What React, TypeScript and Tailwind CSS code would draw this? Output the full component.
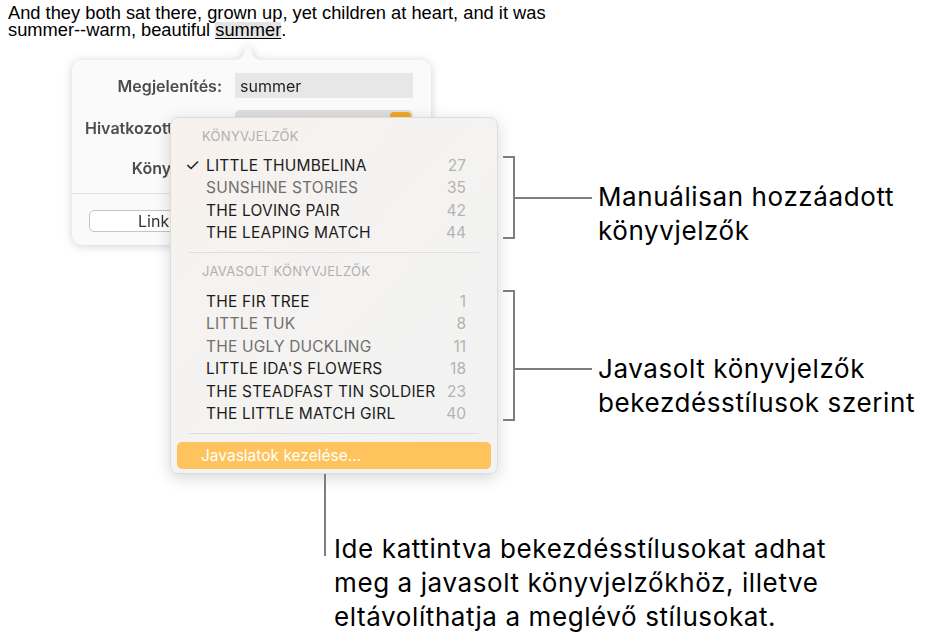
import React from "react";

const bookmarks = [
  { name: "LITTLE THUMBELINA", page: "27", dim: false, checked: true },
  { name: "SUNSHINE STORIES", page: "35", dim: true, checked: false },
  { name: "THE LOVING PAIR", page: "42", dim: false, checked: false },
  { name: "THE LEAPING MATCH", page: "44", dim: false, checked: false },
];

const suggested = [
  { name: "THE FIR TREE", page: "1", dim: false },
  { name: "LITTLE TUK", page: "8", dim: true },
  { name: "THE UGLY DUCKLING", page: "11", dim: true },
  { name: "LITTLE IDA'S FLOWERS", page: "18", dim: false },
  { name: "THE STEADFAST TIN SOLDIER", page: "23", dim: false },
  { name: "THE LITTLE MATCH GIRL", page: "40", dim: false },
];

function Row({ name, page, dim, checked }: { name: string; page: string; dim: boolean; checked?: boolean }) {
  return (
    <div className="flex h-[22.5px] items-center pl-[14px] pr-[31px]">
      <span className="w-[21px] text-[17px] leading-none text-[#1c1c1c]">{checked ? "✓" : ""}</span>
      <span className={`flex-1 text-[15.5px] tracking-[0.2px] ${dim ? "text-[#6f6f6f]" : "text-[#1c1c1c]"}`}>{name}</span>
      <span className="text-[15.5px] text-[#b3b3b3]">{page}</span>
    </div>
  );
}

function SectionHeader({ children }: { children: React.ReactNode }) {
  return (
    <div className="flex h-[20px] items-center pl-[31px] text-[13px] tracking-[0.3px] text-[#b0b0b0]">{children}</div>
  );
}

export default function App() {
  return (
    <div className="relative h-[643px] w-[937px] overflow-hidden bg-white font-['Inter',sans-serif]">
      <p className="pl-[8px] pt-[4px] font-['Liberation_Sans',Arial,sans-serif] text-[18.3px] leading-[17px] text-black">
        And they both sat there, grown up, yet children at heart, and it was
        <br />
        summer--warm, beautiful{" "}
        <span className="inline-block bg-[#e4e4e4] leading-[16px] underline underline-offset-2">summer</span>.
      </p>

      {/* link popover */}
      <div className="relative ml-[72px] mt-[22px] w-[359px] drop-shadow-[0_1px_5px_rgba(0,0,0,0.18)]">
        <svg className="absolute left-[156px] top-[-16px]" width="40" height="17" viewBox="0 0 40 17">
          <path d="M0 17 C8 17 12 15 15 11 L19 2 Q20 0 21 2 L25 11 C28 15 32 17 40 17 Z" fill="#fafafa" />
        </svg>
        <div className="flex h-[185px] flex-col rounded-[10px] bg-[#fafafa] pt-[13px]">
          <div className="flex h-[25px] items-center gap-[13px]">
            <span className="w-[150px] text-right text-[16px] font-semibold text-[#4d4d4d]">Megjelenítés:</span>
            <div className="flex h-[25px] w-[178px] items-center bg-[#e7e7e7] pl-[5px] text-[16px] text-[#1f1f1f]">
              summer
            </div>
          </div>
          <div className="mt-[12px] flex h-[28px] items-start gap-[13px]">
            <span className="mt-[6px] w-[150px] whitespace-nowrap pl-[13px] text-[16px] font-semibold text-[#4d4d4d]">
              Hivatkozott elem:
            </span>
            <div className="relative h-[28px] w-[178px] rounded-[5px] bg-[#dedede]">
              <div className="absolute right-[2px] top-[2px] h-[18px] w-[21px] rounded-[4px] bg-[#f3a72a]" />
            </div>
          </div>
          <div className="mt-[20px] flex h-[20px] items-center">
            <span className="w-[150px] text-right text-[16px] font-semibold text-[#4d4d4d]">Könyvjelző:</span>
          </div>
          <div className="mt-[15px] h-px w-full bg-[#e1e1e1]" />
          <div className="ml-[17px] mt-[16px] flex h-[22px] w-[150px] items-center whitespace-nowrap rounded-[5px] border border-[#c4c4c4] bg-white pl-[48px] text-[16px] text-[#333]">
            Link megnyitása
          </div>
        </div>
      </div>

      {/* bookmark menu */}
      <div className="absolute left-[170px] top-[117px] flex h-[357px] w-[328px] flex-col rounded-[8px] border border-[#dcdcdc] bg-gradient-to-br from-[#f7f1ec] via-[#f4f3f2] to-[#f2f2f2] pt-[9px] shadow-[0_4px_16px_rgba(0,0,0,0.16)]">
        <SectionHeader>KÖNYVJELZŐK</SectionHeader>
        <div className="mt-[7px]">
          {bookmarks.map((b) => (
            <Row key={b.name} {...b} />
          ))}
        </div>
        <div className="mx-[18px] mt-[8px] h-px bg-[#dedede]" />
        <div className="mt-[9px]">
          <SectionHeader>JAVASOLT KÖNYVJELZŐK</SectionHeader>
        </div>
        <div className="mt-[8px]">
          {suggested.map((b) => (
            <Row key={b.name} {...b} />
          ))}
        </div>
        <div className="mx-[18px] mt-[8px] h-px bg-[#dedede]" />
        <div className="mx-[6px] mt-[8px] flex h-[27px] items-center rounded-[5px] bg-[#fec35c] pl-[24px] text-[15.5px] text-white">
          Javaslatok kezelése...
        </div>
      </div>

      {/* callout brackets */}
      <div className="absolute left-[503px] top-[156px] h-[83px] w-[12px] border-y-2 border-r-2 border-[#7e7e7e]" />
      <div className="absolute left-[513px] top-[197px] h-[2px] w-[79px] bg-[#7e7e7e]" />
      <div className="absolute left-[503px] top-[290px] h-[131px] w-[12px] border-y-2 border-r-2 border-[#7e7e7e]" />
      <div className="absolute left-[513px] top-[368px] h-[2px] w-[79px] bg-[#7e7e7e]" />
      <div className="absolute left-[324px] top-[474px] h-[82px] w-[2px] bg-[#7e7e7e]" />

      <div className="absolute left-[598px] top-[180px] text-[26px] leading-[34px] tracking-[0.6px] text-black">
        Manuálisan hozzáadott
        <br />
        könyvjelzők
      </div>
      <div className="absolute left-[598px] top-[352px] text-[26px] leading-[34px] tracking-[0.6px] text-black">
        Javasolt könyvjelzők
        <br />
        bekezdésstílusok szerint
      </div>
      <div className="absolute left-[334px] top-[532px] text-[26px] leading-[34px] tracking-[0.6px] text-black">
        Ide kattintva bekezdésstílusokat adhat
        <br />
        meg a javasolt könyvjelzőkhöz, illetve
        <br />
        eltávolíthatja a meglévő stílusokat.
      </div>
    </div>
  );
}
